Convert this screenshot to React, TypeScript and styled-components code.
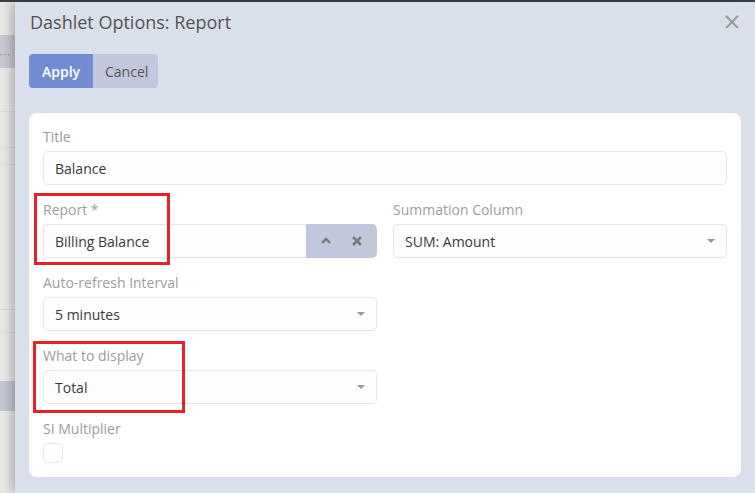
import { FC } from "react";
import styled, { createGlobalStyle } from "styled-components";

const GlobalStyle = createGlobalStyle`
  html, body {
    margin: 0;
    padding: 0;
    width: 755px;
    height: 493px;
    overflow: hidden;
    font-family: "Open Sans", "Liberation Sans", sans-serif;
  }
`;

const Screen = styled.div`
  width: 755px;
  height: 493px;
  display: flex;
  flex-direction: column;
  background: #3f3f3f;
`;

const TopLine = styled.div`
  height: 2px;
  flex: none;
`;

const Body = styled.div`
  flex: 1;
  display: flex;
  min-height: 0;
`;

const Backdrop = styled.div`
  width: 15px;
  flex: none;
  display: flex;
  flex-direction: column;
  background: #e9e9ea;
  overflow: hidden;
`;

const BackRow = styled.div<{ $h: number; $bg?: string; $line?: boolean }>`
  height: ${(p) => p.$h}px;
  flex: none;
  background: ${(p) => p.$bg || "transparent"};
  border-bottom: ${(p) => (p.$line ? "1px solid #dcdcde" : "none")};
  color: #8a8b93;
  font-size: 10px;
  line-height: ${(p) => p.$h + 6}px;
  letter-spacing: 1px;
`;

const Modal = styled.div`
  flex: 1;
  background: #dae0eb;
  box-shadow: -4px 0 10px rgba(0, 0, 0, 0.25);
  display: flex;
  flex-direction: column;
  padding: 0 14px 0 14px;
  position: relative;
`;

const Header = styled.div`
  height: 40px;
  display: flex;
  align-items: center;
  justify-content: space-between;
  padding-left: 1px;
`;

const Title = styled.h2`
  margin: 0;
  font-size: 18px;
  font-weight: 400;
  color: #545454;
`;

const Close = styled.button`
  border: none;
  background: none;
  padding: 0;
  width: 16px;
  height: 16px;
  display: flex;
  margin-right: 1px;
  cursor: pointer;
`;

const ButtonBar = styled.div`
  display: flex;
  margin-top: 12px;
`;

const Btn = styled.button<{ $primary?: boolean }>`
  height: 34px;
  border: none;
  padding: 0 12px;
  font-family: inherit;
  font-size: 14px;
  background: ${(p) => (p.$primary ? "#728cd2" : "#c2c7dc")};
  color: ${(p) => (p.$primary ? "#ffffff" : "#555555")};
  font-weight: ${(p) => (p.$primary ? 600 : 400)};
  border-radius: ${(p) => (p.$primary ? "4px 0 0 4px" : "0 4px 4px 0")};
  width: ${(p) => (p.$primary ? 64 : 65)}px;
`;

const Card = styled.div`
  margin-top: 25px;
  width: 712px;
  background: #ffffff;
  border-radius: 8px;
  padding: 14px 14px 14px 14px;
  box-sizing: border-box;
  display: flex;
  flex-direction: column;
  gap: 15px;
`;

const Row = styled.div`
  display: grid;
  grid-template-columns: 334px 334px;
  column-gap: 16px;
`;

const Field = styled.div`
  display: flex;
  flex-direction: column;
  gap: 4px;
  position: relative;
`;

const Label = styled.label`
  font-size: 14px;
  line-height: 20px;
  color: #9c9c9c;
`;

const Input = styled.div`
  height: 34px;
  box-sizing: border-box;
  border: 1px solid #e2e4f1;
  border-radius: 5px;
  background: #fdfdfe;
  display: flex;
  align-items: center;
  padding: 0 11px;
  font-size: 14px;
  color: #3a3a3a;
  justify-content: space-between;
`;

const Combo = styled.div`
  height: 34px;
  display: flex;
`;

const ComboText = styled(Input)`
  flex: 1;
  border-radius: 5px 0 0 5px;
  border-right: none;
`;

const ComboButtons = styled.div`
  width: 71px;
  background: #c2c7dc;
  border-radius: 0 5px 5px 0;
  display: flex;
  align-items: center;
  justify-content: space-around;
  padding: 0 4px;
  box-sizing: border-box;
`;

const Caret = styled.span`
  width: 0;
  height: 0;
  border-left: 4px solid transparent;
  border-right: 4px solid transparent;
  border-top: 4px solid #9a9a9a;
`;

const Checkbox = styled.div`
  width: 20px;
  height: 20px;
  box-sizing: border-box;
  border: 1px solid #e2e4f1;
  border-radius: 5px;
  background: #fdfdfe;
`;

const Marker = styled.div<{ $l: number; $t: number; $w: number }>`
  position: absolute;
  left: ${(p) => p.$l}px;
  top: ${(p) => p.$t}px;
  width: ${(p) => p.$w}px;
  height: 72px;
  box-sizing: border-box;
  border: 3px solid #e8202a;
  pointer-events: none;
`;

const SelectField: FC<{ label: string; value: string }> = ({ label, value }) => (
  <Field>
    <Label>{label}</Label>
    <Input>
      {value}
      <Caret />
    </Input>
  </Field>
);

export default function App() {
  return (
    <Screen>
      <GlobalStyle />
      <TopLine />
      <Body>
        <Backdrop>
          <BackRow $h={33} />
          <BackRow $h={33} $bg="#c9cad3">···</BackRow>
          <BackRow $h={43} $line />
          <BackRow $h={35} $line />
          <BackRow $h={16} $line />
          <BackRow $h={144} $line />
          <BackRow $h={22} $line />
          <BackRow $h={48} />
          <BackRow $h={30} $bg="#c6c8d3" />
          <BackRow $h={85} />
        </Backdrop>
        <Modal>
          <Header>
            <Title>Dashlet Options: Report</Title>
            <Close aria-label="close">
              <svg width="16" height="16" viewBox="0 0 16 16">
                <path d="M2 2 L14 14 M14 2 L2 14" stroke="#9a9a9a" strokeWidth="2" />
              </svg>
            </Close>
          </Header>
          <ButtonBar>
            <Btn $primary>Apply</Btn>
            <Btn>Cancel</Btn>
          </ButtonBar>
          <Card>
            <Field>
              <Label>Title</Label>
              <Input>Balance</Input>
            </Field>
            <Row>
              <Field>
                <Label>Report *</Label>
                <Combo>
                  <ComboText>Billing Balance</ComboText>
                  <ComboButtons>
                    <svg width="12" height="10" viewBox="0 0 12 10">
                      <path d="M2 7 L6 3 L10 7" fill="none" stroke="#7a7a7a" strokeWidth="2.4" />
                    </svg>
                    <svg width="12" height="12" viewBox="0 0 12 12">
                      <path d="M2 2 L10 10 M10 2 L2 10" stroke="#7a7a7a" strokeWidth="2.6" />
                    </svg>
                  </ComboButtons>
                </Combo>
                <Marker $l={-9} $t={-7} $w={136} />
              </Field>
              <SelectField label="Summation Column" value="SUM: Amount" />
            </Row>
            <Row>
              <SelectField label="Auto-refresh Interval" value="5 minutes" />
            </Row>
            <Row>
              <Field>
                <Label>What to display</Label>
                <Input>
                  Total
                  <Caret />
                </Input>
                <Marker $l={-10} $t={-5} $w={152} />
              </Field>
            </Row>
            <Field>
              <Label>SI Multiplier</Label>
              <Checkbox />
            </Field>
          </Card>
        </Modal>
      </Body>
    </Screen>
  );
}
